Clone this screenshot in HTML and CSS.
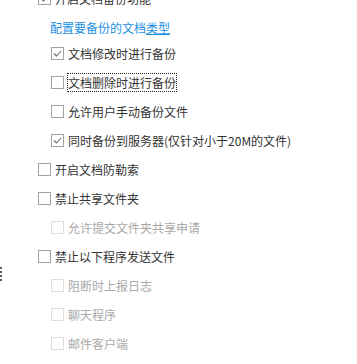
FILE: index.html
```html
<!DOCTYPE html>
<html lang="zh-CN">
<head>
<meta charset="utf-8">
<title>备份设置</title>
<link rel="stylesheet" href="styles.css">
</head>
<body>
<div class="panel">
  <div class="grip"></div>
  <div class="list">
    <div class="row l1"><span class="cb checked"><svg viewBox="0 0 11 11"><polyline points="2,5.5 4.5,8 9,3"/></svg></span><span class="txt">开启文档备份功能</span></div>
    <div class="title">配置要备份的文档<span class="u">类型</span></div>
    <div class="row l2"><span class="cb checked"><svg viewBox="0 0 11 11"><polyline points="2,5.5 4.5,8 9,3"/></svg></span><span class="txt">文档修改时进行备份</span></div>
    <div class="row l2"><span class="cb"></span><span class="txt focus">文档删除时进行备份</span></div>
    <div class="row l2"><span class="cb"></span><span class="txt">允许用户手动备份文件</span></div>
    <div class="row l2"><span class="cb checked"><svg viewBox="0 0 11 11"><polyline points="2,5.5 4.5,8 9,3"/></svg></span><span class="txt">同时备份到服务器(仅针对小于20M的文件)</span></div>
    <div class="row l1"><span class="cb"></span><span class="txt">开启文档防勒索</span></div>
    <div class="row l1"><span class="cb"></span><span class="txt">禁止共享文件夹</span></div>
    <div class="row l2 disabled"><span class="cb"></span><span class="txt">允许提交文件夹共享申请</span></div>
    <div class="row l1"><span class="cb"></span><span class="txt">禁止以下程序发送文件</span></div>
    <div class="row l2 disabled"><span class="cb"></span><span class="txt">阻断时上报日志</span></div>
    <div class="row l2 disabled"><span class="cb"></span><span class="txt">聊天程序</span></div>
    <div class="row l2 disabled"><span class="cb"></span><span class="txt">邮件客户端</span></div>
  </div>
</div>
</body>
</html>
```
FILE: styles.css
```css
html, body {
  margin: 0;
  background: #ffffff;
}
body {
  font-family: "Noto Sans CJK SC", "Microsoft YaHei", sans-serif;
  font-size: 12px;
  color: #333333;
  overflow: hidden;
}
.panel {
  position: relative;
  height: 364px;
  overflow: hidden;
}
.grip {
  position: absolute;
  left: 0;
  top: 267px;
  width: 2px;
  height: 14px;
  background: repeating-linear-gradient(to bottom, #5a5a5a 0 2px, transparent 2px 4px);
}
.list {
  display: flex;
  flex-direction: column;
  margin-top: -16px;
}
.row {
  display: flex;
  align-items: center;
  gap: 4px;
  height: 29px;
}
.l1 { padding-left: 38px; }
.l2 { padding-left: 51px; }
.cb {
  flex: none;
  width: 13px;
  height: 13px;
  box-sizing: border-box;
  border: 1px solid #a3a3a3;
  background: #ffffff;
  display: flex;
}
.cb svg {
  width: 11px;
  height: 11px;
  fill: none;
  stroke: #6b6b6b;
  stroke-width: 1.1;
}
.txt {
  line-height: 17px;
  white-space: nowrap;
}
.focus {
  display: inline-block;
  outline: 1px dotted #222222;
}
.disabled .cb { border-color: #dddddd; }
.disabled .txt { color: #a9a9a9; }
.title {
  display: flex;
  align-items: center;
  height: 24px;
  margin-top: 2px;
  padding-left: 50px;
  color: #1a8fe3;
  white-space: nowrap;
}
.u {
  text-decoration: underline;
  text-underline-offset: 1px;
}
```
